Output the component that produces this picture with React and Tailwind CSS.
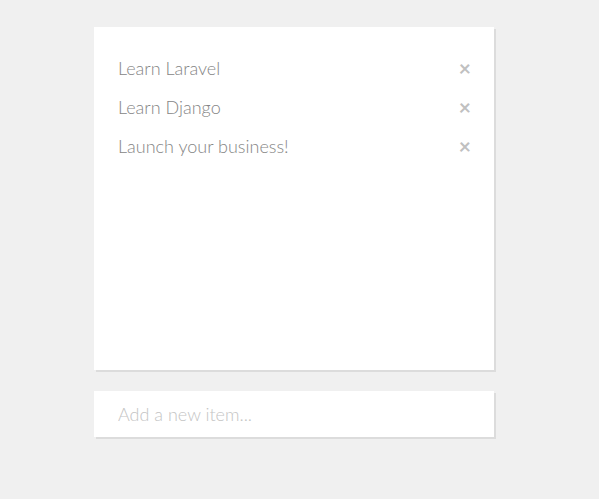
const items = ["Learn Laravel", "Learn Django", "Launch your business!"];

export default function App() {
  return (
    <div className="min-h-[499px] bg-[#f0f0f0] pl-[94px] pt-[27px] font-['Lato',sans-serif] font-light">
      <div className="w-[400px]">
        <ul className="h-[343px] bg-white pl-6 pr-[23px] pt-[22px] shadow-[2px_2px_0_#dcdcdc]">
          {items.map((item) => (
            <li key={item} className="flex h-[39px] items-center justify-between text-[18px] text-[#858585]">
              <span>{item}</span>
              <span className="-mt-[2px] text-[21px] font-bold leading-none text-[#c0c0c0]">×</span>
            </li>
          ))}
        </ul>
        <input
          className="mt-[21px] h-[46px] w-full bg-white px-6 text-[18px] text-[#858585] placeholder-[#c4c4c4] shadow-[2px_2px_0_#dcdcdc] outline-none"
          placeholder="Add a new item..."
        />
      </div>
    </div>
  );
}
